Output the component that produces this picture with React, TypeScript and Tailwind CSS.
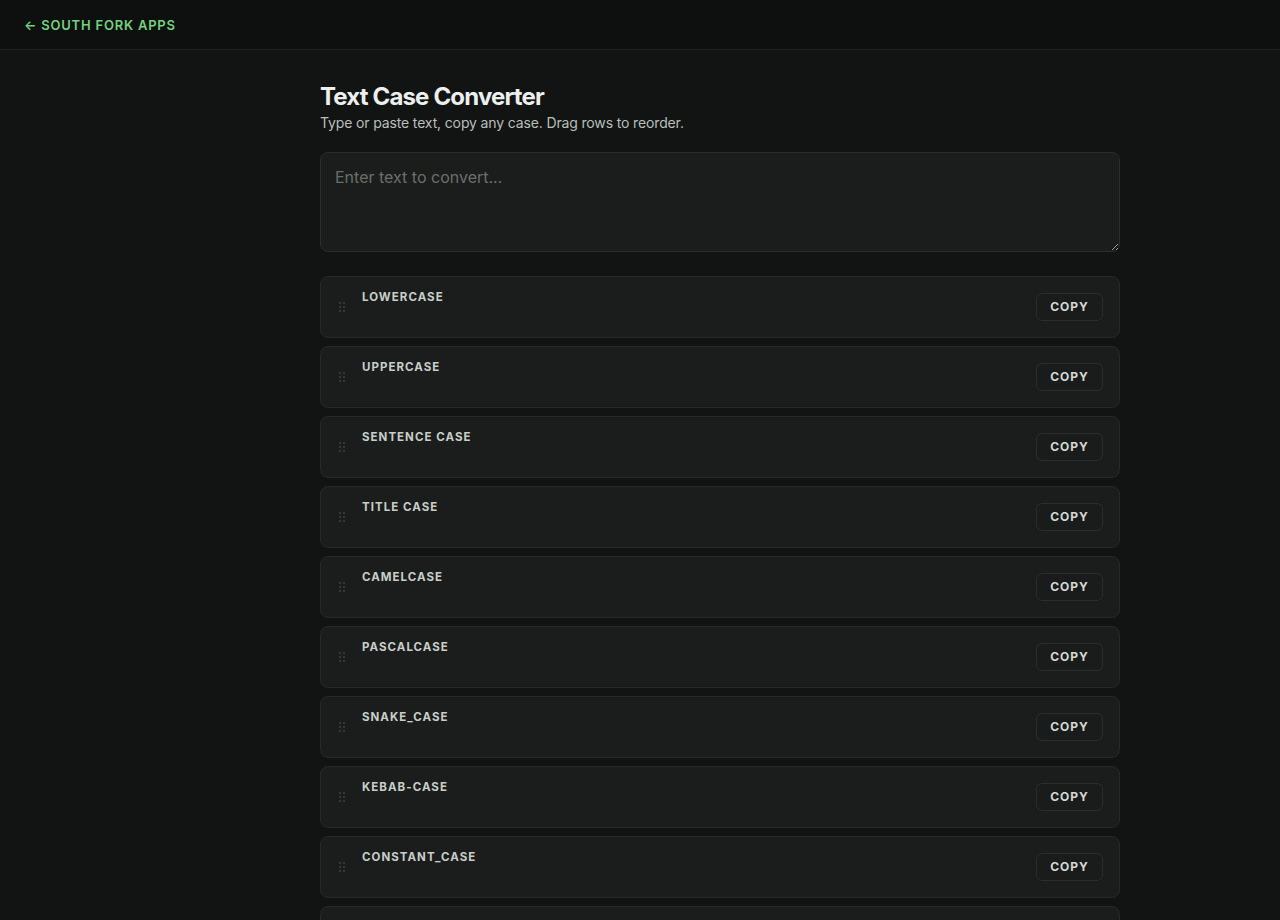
import { useState } from "react";

const CASES = [
  "lowercase",
  "UPPERCASE",
  "Sentence case",
  "Title Case",
  "camelCase",
  "PascalCase",
  "snake_case",
  "kebab-case",
  "CONSTANT_CASE",
  "dot.case",
  "path/case",
];

function DragHandle() {
  return (
    <svg width="8" height="12" viewBox="0 0 8 12" className="text-[#3a3e3c]" fill="currentColor">
      <circle cx="2" cy="2" r="1.1" />
      <circle cx="6" cy="2" r="1.1" />
      <circle cx="2" cy="6" r="1.1" />
      <circle cx="6" cy="6" r="1.1" />
      <circle cx="2" cy="10" r="1.1" />
      <circle cx="6" cy="10" r="1.1" />
    </svg>
  );
}

export default function App() {
  const [text, setText] = useState("");

  return (
    <div
      className="min-h-screen bg-[#121413] text-[#e6e9e7]"
      style={{ fontFamily: "Inter, 'Noto Sans', sans-serif" }}
    >
      <header className="h-[50px] flex items-center px-6 pt-[3px] bg-[#0e0f0f] border-b border-[#202322]">
        <a href="#" className="text-[13px] font-semibold tracking-[0.06em] text-[#72d17f]">
          ← SOUTH FORK APPS
        </a>
      </header>

      <main className="w-[800px] ml-[320px] pt-[31px] pb-10">
        <h1 className="text-[24px] leading-8 font-bold tracking-[-0.035em] text-[#ecefed]">
          Text Case Converter
        </h1>
        <p className="text-[14px] leading-5 text-[#b9bfbb] tracking-[-0.01em]">
          Type or paste text, copy any case. Drag rows to reorder.
        </p>

        <textarea
          value={text}
          onChange={(e) => setText(e.target.value)}
          placeholder="Enter text to convert..."
          className="mt-[19px] block w-full h-[100px] rounded-lg bg-[#1b1d1c] border border-[#2a2d2b] px-[14px] pt-[12px] pb-[14px] text-[16px] leading-6 text-[#e6e9e7] placeholder:text-[#6a6f6c] outline-none"
        />

        <div className="mt-6 flex flex-col gap-[8px]">
          {CASES.map((c) => (
            <div
              key={c}
              className="flex items-center rounded-lg bg-[#1b1d1c] border border-[#262928] pl-[17px] pr-4 py-3"
            >
              <DragHandle />
              <div className="flex-1 ml-[16px] self-start">
                <div className="text-[11.5px] leading-4 font-bold tracking-[0.09em] uppercase text-[#c8cec9]">
                  {c}
                </div>
                <div className="mt-1 min-h-[16px] text-[14px] text-[#e6e9e7]"></div>
              </div>
              <button className="h-[28px] w-[67px] rounded-md border border-[#2a2d2b] bg-[#1a1c1b] text-[12px] font-bold tracking-[0.08em] text-[#d3d8d4]">
                COPY
              </button>
            </div>
          ))}
        </div>
      </main>
    </div>
  );
}
